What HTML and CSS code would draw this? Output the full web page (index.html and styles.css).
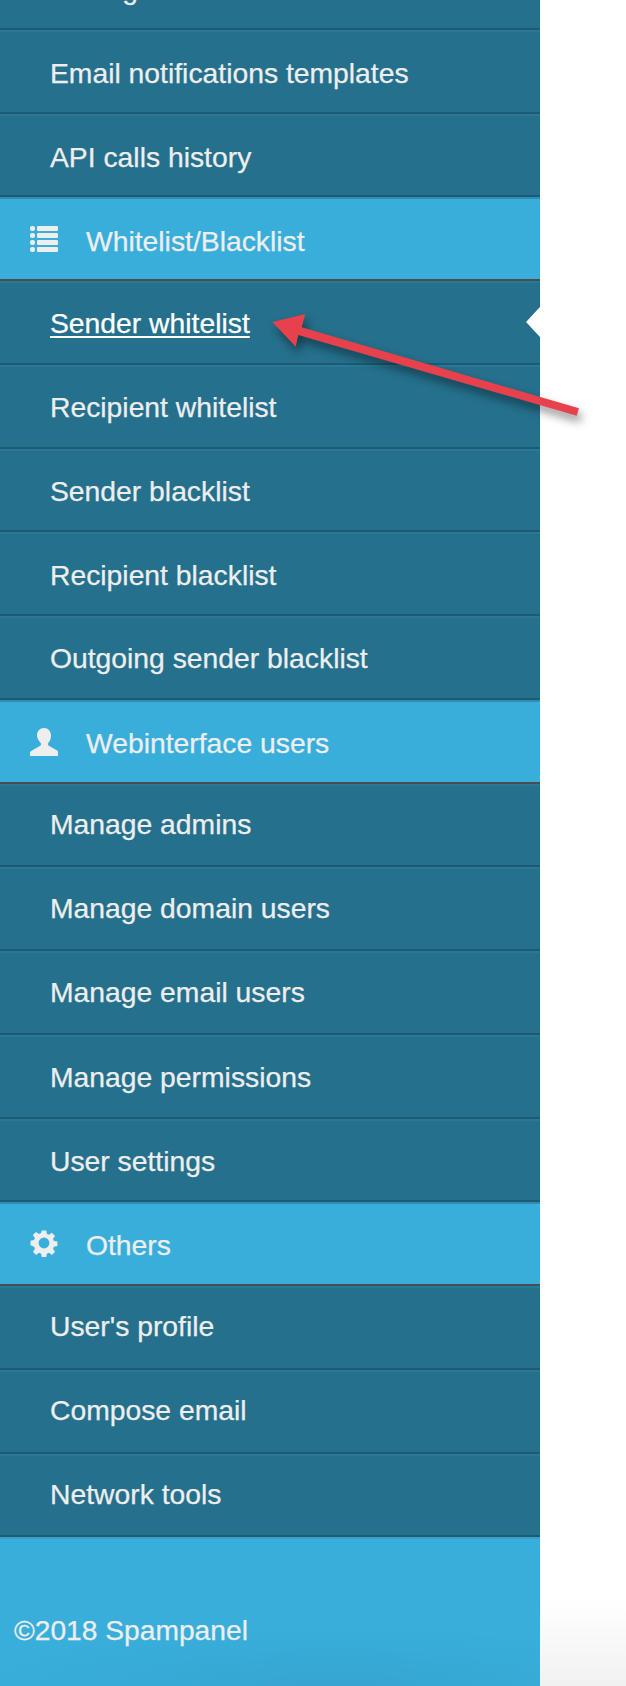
FILE: index.html
```html
<!DOCTYPE html>
<html lang="en">
<head>
<meta charset="utf-8">
<title>Spampanel</title>
<link rel="stylesheet" href="styles.css">
</head>
<body>
<aside class="sidebar">
  <nav class="menu">
    <a class="item drop">Settings</a>
    <a class="item drop">Email notifications templates</a>
    <a class="item drop">API calls history</a>
    <div class="head drop">
      <svg class="icon" viewBox="0 0 28 28"><rect x="0" y="1" width="5" height="5" rx="2"/><rect x="0" y="8" width="5" height="5" rx="2"/><rect x="0" y="15" width="5" height="5" rx="2"/><rect x="0" y="22" width="5" height="5" rx="2"/><rect x="7" y="1" width="21" height="5" rx="1"/><rect x="7" y="8" width="21" height="5" rx="1"/><rect x="7" y="15" width="21" height="5" rx="1"/><rect x="7" y="22" width="21" height="5" rx="1"/></svg>
      <span>Whitelist/Blacklist</span>
    </div>
    <a class="item item-active drop-sm"><span class="active-text">Sender whitelist</span></a>
    <a class="item drop-sm">Recipient whitelist</a>
    <a class="item drop-sm">Sender blacklist</a>
    <a class="item drop-sm">Recipient blacklist</a>
    <a class="item drop-sm">Outgoing sender blacklist</a>
    <div class="head drop">
      <svg class="icon" viewBox="0 0 28 28"><path d="M14 0c4.200 0 7 3.200 7 7.500 0 3-1.100 5.700-2.700 7.400-.7.800-.5 2.200.5 2.800l8.700 5c.9.500 1.500 1.200 1.500 2.300V28H0v-3c0-1.100.6-1.800 1.500-2.300l8.700-5c1-.6 1.200-2 .5-2.800C9.100 13.200 7 10.500 7 7.500 7 3.200 9.800 0 14 0z"/></svg>
      <span>Webinterface users</span>
    </div>
    <a class="item up">Manage admins</a>
    <a class="item up">Manage domain users</a>
    <a class="item">Manage email users</a>
    <a class="item drop-sm">Manage permissions</a>
    <a class="item drop-sm">User settings</a>
    <div class="head drop-sm">
      <svg class="icon" viewBox="0 0 28 28"><path fill-rule="evenodd" d="M11.500 0h5l.7 3.900 2.300 1 3.300-2.300 3.500 3.500-2.300 3.300 1 2.300 3.900.7v5l-3.900.7-1 2.300 2.300 3.300-3.500 3.500-3.300-2.300-2.300 1-.7 3.900h-5l-.7-3.900-2.300-1-3.300 2.300-3.500-3.500 2.300-3.300-1-2.300L-1 16.500v-5l3.900-.7 1-2.300-2.300-3.300 3.500-3.500 3.300 2.300 2.300-1zM14 8a6 6 0 1 0 0 12 6 6 0 0 0 0-12z" transform="translate(1.400 1.400) scale(.9)"/></svg>
      <span>Others</span>
    </div>
    <a class="item up">User's profile</a>
    <a class="item up">Compose email</a>
    <a class="item up">Network tools</a>
  </nav>
  <footer class="foot">©2018 Spampanel</footer>
</aside>
<svg class="arrow" viewBox="0 0 626 1686" aria-hidden="true"><path d="M272.300 322 305.300 314 301.700 327.300 578.900 408.300 576.700 415.700 298.300 335 295.700 346.700z"/></svg>
</body>
</html>
```
FILE: styles.css
```css
* { box-sizing: border-box; }
html, body { margin: 0; padding: 0; height: 100%; }
body {
  position: relative;
  height: 1686px;
  overflow: hidden;
  background: linear-gradient(to bottom, #fff 0, #fff 1600px, #f1f1f1 1686px);
  font-family: "Liberation Sans", Arial, sans-serif;
  color: #eee;
}
.sidebar {
  width: 540px;
  height: 1686px;
  background: #39aedb;
  display: flex;
  flex-direction: column;
  overflow: hidden;
}
.menu { display: flex; flex-direction: column; margin-top: -54px; flex: none; }
.item, .head {
  height: 83.75px;
  display: flex;
  align-items: center;
  font-size: 28.3px;
  -webkit-text-stroke: .25px currentColor;
  flex: none;
}
.drop { padding-top: 4px; }
.drop-sm { padding-top: 2px; }
.up { padding-bottom: 2px; }
.item {
  padding-left: 50px;
  background: #25708c;
  border-top: 2px solid #277a96;
  border-bottom: 2px solid #1f5a72;
}
.head {
  padding-left: 30px;
  gap: 28px;
  background: #39aedb;
  border-top: 2px solid #2c8fb5;
  border-bottom: 2px solid #4a4d50;
}
.icon { width: 28px; height: 28px; fill: #eee; flex: none; margin-top: -4px; }
.item-active { position: relative; color: #fff; }
.active-text { text-decoration: underline; text-decoration-thickness: 1.5px; text-underline-offset: 3px; }
.item-active::after {
  content: "";
  position: absolute;
  right: 0;
  top: 50%;
  margin-top: -16px;
  border-style: solid;
  border-width: 15px 14px 15px 0;
  border-color: transparent #fff transparent transparent;
}
.foot {
  flex: 1;
  font-size: 28.2px;
  -webkit-text-stroke: .25px currentColor;
  padding: 75px 0 0 14px;
  color: #eee;
  border-top: 2px solid #3ba0c4;
  background: radial-gradient(ellipse 360px 60px at 62% 100%, rgba(0, 0, 0, .05), transparent);
}
.arrow {
  position: absolute;
  left: 0;
  top: 0;
  width: 626px;
  height: 1686px;
  fill: #e6414c;
  filter: drop-shadow(3px 6px 5px rgba(0, 0, 0, .45));
  pointer-events: none;
}
```
